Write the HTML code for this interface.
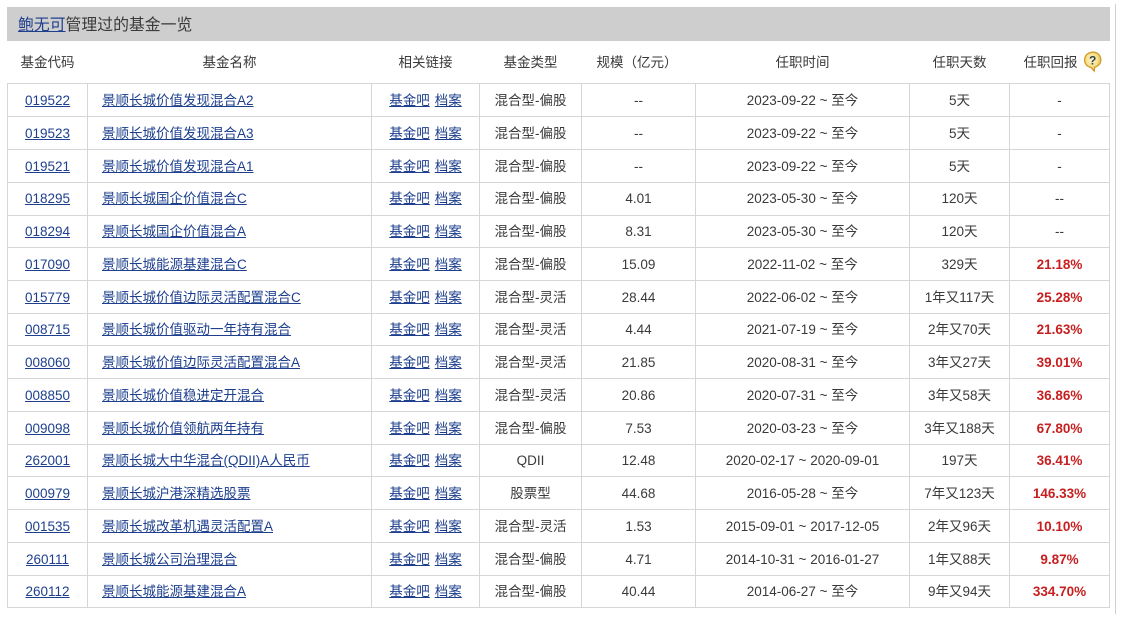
<!DOCTYPE html>
<html lang="zh-CN">
<head>
<meta charset="utf-8">
<title>鲍无可管理过的基金一览</title>
<style>
html,body{margin:0;padding:0;background:#fff;width:1129px;height:625px;overflow:hidden}
body{font-family:"Liberation Sans","Noto Sans CJK SC",sans-serif;color:#3a3a3a;position:relative}
a{color:#1d3f8e;text-decoration:underline}
.vline{position:absolute;left:1115px;top:4px;width:1px;height:610px;background:#c6d3db}
.bar{position:absolute;left:7px;top:7px;width:1103px;height:34px;background:#cecece;font-size:15.85px;line-height:38px;color:#3a3a3a;text-indent:11px}
.bar span,table{filter:blur(.25px)}
table{position:absolute;left:7px;top:41px;width:1102px;border-collapse:collapse;table-layout:fixed;font-size:13.5px}
th{font-weight:normal;height:42px;padding:0;text-align:center;color:#3a3a3a;border:0;position:relative;top:-1px}
td{padding:2px 0 0;text-align:center;border:1px solid #d6d6d6;line-height:16px;white-space:nowrap;overflow:hidden}
td.n{text-align:left;padding-left:14px}
td.r{color:#c71f1f;font-weight:bold}
td a+a{margin-left:5px}
tr.a td{height:30px}
tr.b td{height:29px}
tr.s td{padding-top:1px}
tr.a.s td{height:30px;padding-bottom:1px}
tr.b.s td{height:30px}
th svg{position:absolute;left:73px;top:11px}
</style>
</head>
<body>
<div class="vline"></div>
<div class="bar"><span><a href="#">鲍无可</a>管理过的基金一览</span></div>
<table>
<colgroup><col style="width:80px"><col style="width:284px"><col style="width:108px"><col style="width:102px"><col style="width:114px"><col style="width:214px"><col style="width:100px"><col style="width:100px"></colgroup>
<thead><tr>
<th>基金代码</th><th>基金名称</th><th>相关链接</th><th>基金类型</th><th style="text-indent:-3px">规模（亿元）</th><th>任职时间</th><th>任职天数</th>
<th style="text-indent:-18px">任职回报<svg width="20" height="22" viewBox="0 0 20 22"><defs><radialGradient id="g" cx="45%" cy="40%" r="60%"><stop offset="0" stop-color="#fdf6d0"/><stop offset=".6" stop-color="#f6e08a"/><stop offset="1" stop-color="#eab83c"/></radialGradient></defs><path d="M10 1.200C5 1.200 1.600 4.600 1.600 9c0 3.900 2.700 6.900 6.400 7.500l3.200 3.600.4-3.800c3.600-.9 6.200-3.800 6.200-7.300C17.800 4.600 14.800 1.200 10 1.200z" fill="url(#g)" stroke="#d39a2c" stroke-width="1.300"/><text x="9.700" y="13.500" font-size="12" font-weight="bold" text-anchor="middle" fill="#33474f" font-family="Liberation Sans">?</text></svg></th>
</tr></thead>
<tbody>
<tr class="a"><td><a href="#">019522</a></td><td class="n"><a href="#">景顺长城价值发现混合A2</a></td><td><a href="#">基金吧</a><a href="#">档案</a></td><td>混合型-偏股</td><td>--</td><td>2023-09-22 ~ 至今</td><td>5天</td><td>-</td></tr>
<tr class="a"><td><a href="#">019523</a></td><td class="n"><a href="#">景顺长城价值发现混合A3</a></td><td><a href="#">基金吧</a><a href="#">档案</a></td><td>混合型-偏股</td><td>--</td><td>2023-09-22 ~ 至今</td><td>5天</td><td>-</td></tr>
<tr class="a"><td><a href="#">019521</a></td><td class="n"><a href="#">景顺长城价值发现混合A1</a></td><td><a href="#">基金吧</a><a href="#">档案</a></td><td>混合型-偏股</td><td>--</td><td>2023-09-22 ~ 至今</td><td>5天</td><td>-</td></tr>
<tr class="a s"><td><a href="#">018295</a></td><td class="n"><a href="#">景顺长城国企价值混合C</a></td><td><a href="#">基金吧</a><a href="#">档案</a></td><td>混合型-偏股</td><td>4.01</td><td>2023-05-30 ~ 至今</td><td>120天</td><td>--</td></tr>
<tr class="b s"><td><a href="#">018294</a></td><td class="n"><a href="#">景顺长城国企价值混合A</a></td><td><a href="#">基金吧</a><a href="#">档案</a></td><td>混合型-偏股</td><td>8.31</td><td>2023-05-30 ~ 至今</td><td>120天</td><td>--</td></tr>
<tr class="a"><td><a href="#">017090</a></td><td class="n"><a href="#">景顺长城能源基建混合C</a></td><td><a href="#">基金吧</a><a href="#">档案</a></td><td>混合型-偏股</td><td>15.09</td><td>2022-11-02 ~ 至今</td><td>329天</td><td class="r">21.18%</td></tr>
<tr class="a"><td><a href="#">015779</a></td><td class="n"><a href="#">景顺长城价值边际灵活配置混合C</a></td><td><a href="#">基金吧</a><a href="#">档案</a></td><td>混合型-灵活</td><td>28.44</td><td>2022-06-02 ~ 至今</td><td>1年又117天</td><td class="r">25.28%</td></tr>
<tr class="b s"><td><a href="#">008715</a></td><td class="n"><a href="#">景顺长城价值驱动一年持有混合</a></td><td><a href="#">基金吧</a><a href="#">档案</a></td><td>混合型-灵活</td><td>4.44</td><td>2021-07-19 ~ 至今</td><td>2年又70天</td><td class="r">21.63%</td></tr>
<tr class="a"><td><a href="#">008060</a></td><td class="n"><a href="#">景顺长城价值边际灵活配置混合A</a></td><td><a href="#">基金吧</a><a href="#">档案</a></td><td>混合型-灵活</td><td>21.85</td><td>2020-08-31 ~ 至今</td><td>3年又27天</td><td class="r">39.01%</td></tr>
<tr class="a"><td><a href="#">008850</a></td><td class="n"><a href="#">景顺长城价值稳进定开混合</a></td><td><a href="#">基金吧</a><a href="#">档案</a></td><td>混合型-灵活</td><td>20.86</td><td>2020-07-31 ~ 至今</td><td>3年又58天</td><td class="r">36.86%</td></tr>
<tr class="a"><td><a href="#">009098</a></td><td class="n"><a href="#">景顺长城价值领航两年持有</a></td><td><a href="#">基金吧</a><a href="#">档案</a></td><td>混合型-偏股</td><td>7.53</td><td>2020-03-23 ~ 至今</td><td>3年又188天</td><td class="r">67.80%</td></tr>
<tr class="b s"><td><a href="#">262001</a></td><td class="n"><a href="#">景顺长城大中华混合(QDII)A人民币</a></td><td><a href="#">基金吧</a><a href="#">档案</a></td><td>QDII</td><td>12.48</td><td>2020-02-17 ~ 2020-09-01</td><td>197天</td><td class="r">36.41%</td></tr>
<tr class="a"><td><a href="#">000979</a></td><td class="n"><a href="#">景顺长城沪港深精选股票</a></td><td><a href="#">基金吧</a><a href="#">档案</a></td><td>股票型</td><td>44.68</td><td>2016-05-28 ~ 至今</td><td>7年又123天</td><td class="r">146.33%</td></tr>
<tr class="a"><td><a href="#">001535</a></td><td class="n"><a href="#">景顺长城改革机遇灵活配置A</a></td><td><a href="#">基金吧</a><a href="#">档案</a></td><td>混合型-灵活</td><td>1.53</td><td>2015-09-01 ~ 2017-12-05</td><td>2年又96天</td><td class="r">10.10%</td></tr>
<tr class="a"><td><a href="#">260111</a></td><td class="n"><a href="#">景顺长城公司治理混合</a></td><td><a href="#">基金吧</a><a href="#">档案</a></td><td>混合型-偏股</td><td>4.71</td><td>2014-10-31 ~ 2016-01-27</td><td>1年又88天</td><td class="r">9.87%</td></tr>
<tr class="b s"><td><a href="#">260112</a></td><td class="n"><a href="#">景顺长城能源基建混合A</a></td><td><a href="#">基金吧</a><a href="#">档案</a></td><td>混合型-偏股</td><td>40.44</td><td>2014-06-27 ~ 至今</td><td>9年又94天</td><td class="r">334.70%</td></tr>
</tbody>
</table>
</body>
</html>
